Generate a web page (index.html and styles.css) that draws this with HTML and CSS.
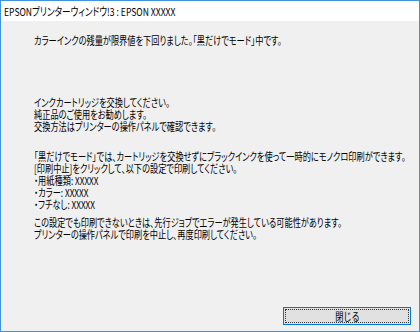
FILE: index.html
```html
<!DOCTYPE html>
<html lang="ja">
<head>
    <meta charset="UTF-8">
    <title>EPSONプリンターウィンドウ!3</title>
    <link rel="stylesheet" href="styles.css">
</head>
<body>
    <div class="window">
        <div class="titlebar"><span class="narrow-title">EPSONプリンターウィンドウ!3 : EPSON XXXXX</span></div>
        <div class="content">
            <p class="lead">カラーインクの残量が限界値を下回りました。「黒だけでモード」中です。</p>

            <p class="block first">インクカートリッジを交換してください。<br>
                純正品のご使用をお勧めします。<br>
                交換方法はプリンターの操作パネルで確認できます。</p>

            <p class="block second">「黒だけでモード」では、カートリッジを交換せずにブラックインクを使って一時的にモノクロ印刷ができます。<br>
                [印刷中止]をクリックして、以下の設定で印刷してください。<br>
                ・用紙種類: XXXXX<br>
                ・カラー: XXXXX<br>
                ・フチなし: XXXXX</p>

            <p class="block last">この設定でも印刷できないときは、先行ジョブでエラーが発生している可能性があります。<br>
                プリンターの操作パネルで印刷を中止し、再度印刷してください。</p>

            <div class="footer">
                <button class="btn"><span class="btn-label">閉じる</span></button>
            </div>
        </div>
    </div>
</body>
</html>
```

FILE: styles.css
```css
body {
    margin: 0;
    padding: 0;
    font-family: "Noto Sans CJK JP", sans-serif;
    font-feature-settings: "palt";
    font-size: 11px;
    color: #000;
}

.window {
    width: 420px;
    height: 332px;
    box-sizing: border-box;
    border: 1px solid #3f93dc;
    display: flex;
    flex-direction: column;
    background-color: #f0f0f0;
    overflow: hidden;
}

.titlebar {
    height: 20px;
    line-height: 20px;
    padding-left: 3px;
    background-color: #fff;
    font-size: 11px;
}

/* the dialog font is a condensed UI face, so squeeze the glyphs */
.narrow-title {
    display: inline-block;
    transform: scaleX(0.78);
    transform-origin: left center;
}

.content {
    flex: 1;
    display: flex;
    flex-direction: column;
    padding: 13px 8px 6px 33px;
}

.content p {
    margin: 0;
    line-height: 12px;
    white-space: nowrap;
    transform: scaleX(0.745);
    transform-origin: left top;
}

.block.first {
    margin-top: 50px;
}

.block.second {
    margin-top: 18px;
}

.block.last {
    margin-top: 6px;
}

.footer {
    margin-top: auto;
    display: flex;
    justify-content: flex-end;
}

.btn {
    width: 128px;
    height: 18px;
    padding: 0;
    background-color: #e1e1e1;
    border: 1px solid #0078d7;
    outline: 1px dotted #333;
    outline-offset: -3px;
    font-family: inherit;
    font-size: 11px;
    line-height: 14px;
}

.btn-label {
    display: inline-block;
    transform: scaleX(0.75);
}
```
